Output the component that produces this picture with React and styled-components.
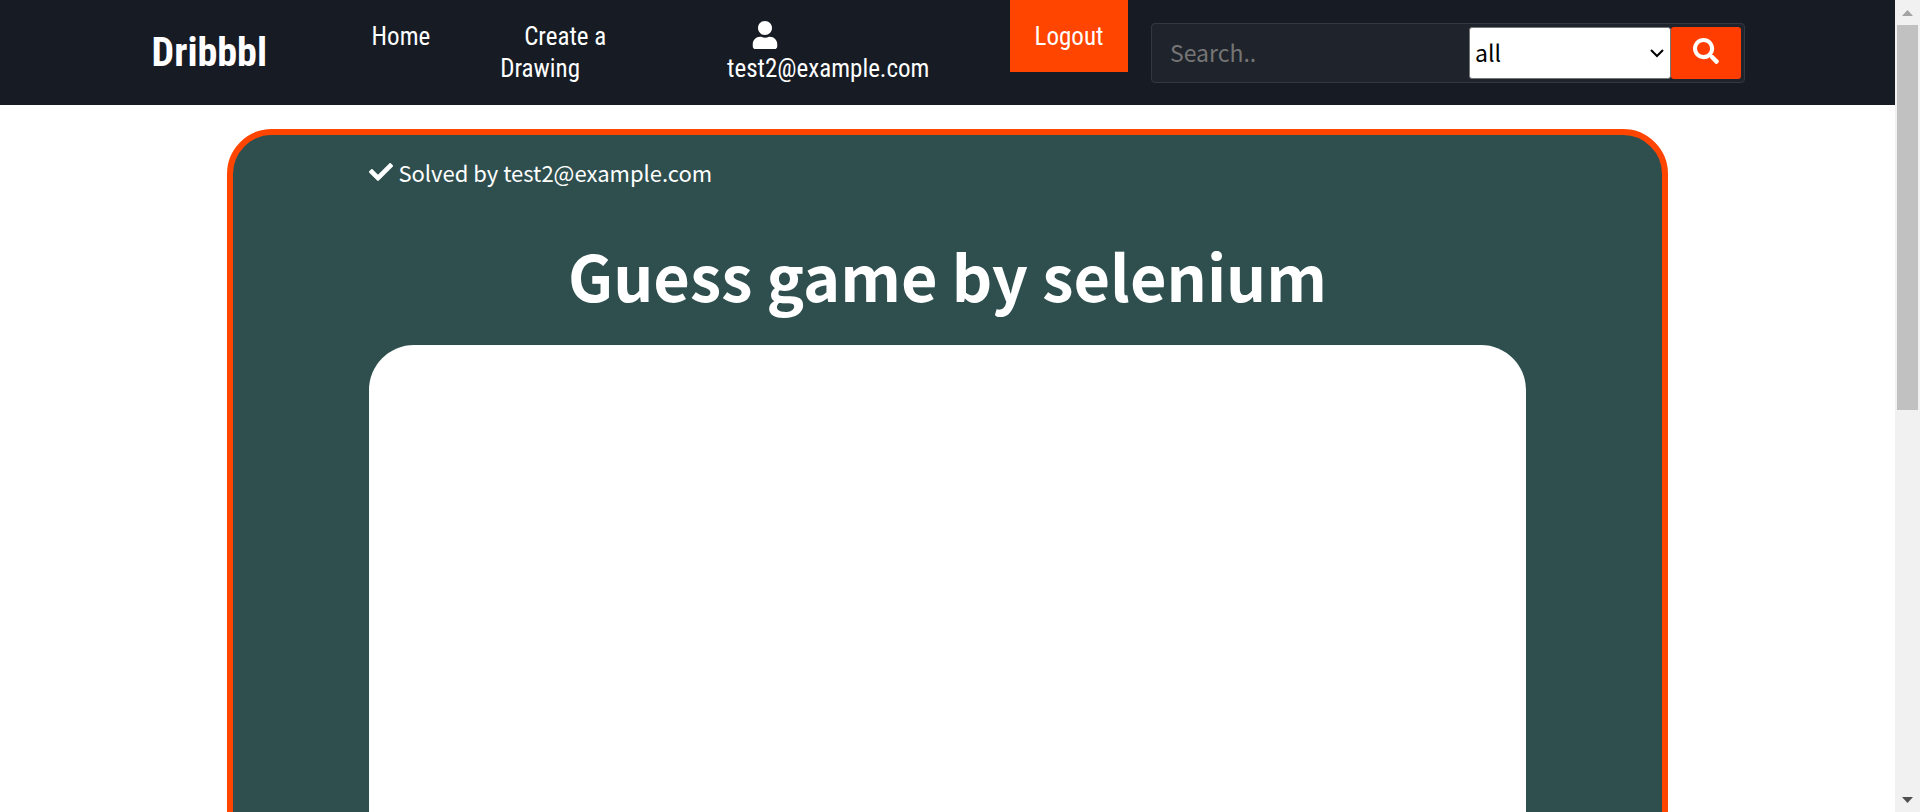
import React from "react";
import styled, { createGlobalStyle } from "styled-components";
import { FaCheck, FaSearch, FaUser } from "react-icons/fa";

const bodyFont = `"Source Sans Pro", "Noto Sans CJK SC", sans-serif`;
const navFont = `"Ubuntu Condensed", "Roboto Condensed", "Noto Sans CJK SC", sans-serif`;

const GlobalStyle = createGlobalStyle`
  *, *::before, *::after { box-sizing: border-box; }
  body { margin: 0; background: #fff; color: #fff; font-family: ${bodyFont}; }
  a { color: inherit; text-decoration: none; }
`;

const Window = styled.div`
  display: flex;
  height: 100vh;
  overflow: hidden;
`;

const Page = styled.div`
  flex: 1;
  min-width: 0;
`;

const Header = styled.header`
  display: flex;
  align-items: flex-start;
  height: 105px;
  padding: 0 150px 0 8%;
  background: #171c24;
`;

const Logo = styled.a`
  flex: 0 0 220px;
  line-height: 106px;
  font-family: ${navFont};
  font-size: 40px;
  font-weight: 700;
`;

const Nav = styled.nav`
  display: grid;
  grid-template-columns: 17% 30% 1fr auto;
  flex: 1;
  align-items: start;
  font-family: ${navFont};
  font-size: 25px;
  line-height: 32px;
`;

const NavLink = styled.a`
  max-width: ${(p) => p.$width || "none"};
  padding-top: 21px;
  text-indent: ${(p) => (p.$indent ? "24px" : "0")};

  svg { display: inline-block; vertical-align: -4px; }
`;

const Logout = styled.button`
  min-width: 118px;
  height: 72px;
  padding: 2px 0 0;
  border: 0;
  background: #ff4500;
  color: #fff;
  font: inherit;
`;

const SearchForm = styled.form`
  display: flex;
  flex: 0 0 594px;
  height: 60px;
  margin: 23px 0 0 23px;
  padding: 3px;
  border: 1px solid #33373e;
  border-radius: 4px;
  background: #1f232b;
`;

const SearchInput = styled.input`
  flex: 1;
  min-width: 0;
  padding: 0 15px 2px;
  border: 0;
  background: transparent;
  color: #fff;
  font-family: ${bodyFont};
  font-size: 23px;

  &::placeholder { color: #757575; opacity: 1; }
`;

const FilterBox = styled.div`
  position: relative;
  display: flex;
  width: 202px;
`;

const Filter = styled.select`
  appearance: none;
  width: 100%;
  padding: 0 5px 2px;
  border: 1px solid #767676;
  border-radius: 3px;
  background: #fff;
  color: #000;
  font-family: ${bodyFont};
  font-size: 23px;
`;

const Chevron = styled.svg`
  position: absolute;
  top: 22px;
  right: 7px;
  width: 14px;
  height: 9px;
  fill: none;
  stroke: #000;
  stroke-width: 2;
  pointer-events: none;
`;

const SearchButton = styled.button`
  display: flex;
  align-items: center;
  justify-content: center;
  width: 70px;
  padding: 0 0 4px;
  border: 0;
  border-radius: 3px;
  background: #ff3d00;
  color: #fff;
`;

const Game = styled.main`
  width: 76%;
  margin: 24px auto 0;
  padding: 21px 136px 60px;
  border: 6px solid #ff4500;
  border-radius: 45px;
  background: #2f4f4f;
`;

const Solved = styled.p`
  display: flex;
  align-items: center;
  gap: 5px;
  margin: 0;
  font-size: 22px;
  line-height: 32px;
`;

const Title = styled.h1`
  margin: 42px 0 25px;
  font-size: 63px;
  line-height: 90px;
  text-align: center;
`;

const Board = styled.section`
  height: 1000px;
  border-radius: 45px;
  background: #fff;
`;

const Scrollbar = styled.div`
  display: flex;
  flex-direction: column;
  align-items: center;
  width: 25px;
  background: #f1f1f1;
`;

const ScrollArrow = styled.svg`
  display: block;
  width: 11px;
  height: 6px;
  margin: 10px 0 9px;
  fill: ${(p) => p.$color};
`;

const Track = styled.div`
  flex: 1;
  width: 21px;
`;

const Thumb = styled.div`
  height: 385px;
  background: #c1c1c1;
`;

export default function App() {
  return (
    <>
      <GlobalStyle />
      <Window>
        <Page>
          <Header>
            <Logo href="#">Dribbbl</Logo>
            <Nav>
              <NavLink href="#">Home</NavLink>
              <NavLink href="#" $indent $width="120px">Create a Drawing</NavLink>
              <NavLink href="#" $indent $width="220px">
                <FaUser size={28} /> test2@example.com
              </NavLink>
              <Logout type="button">Logout</Logout>
            </Nav>
            <SearchForm>
              <SearchInput type="text" placeholder="Search.." aria-label="Search" />
              <FilterBox>
                <Filter aria-label="Filter" defaultValue="all">
                  <option>all</option>
                </Filter>
                <Chevron viewBox="0 0 14 9" aria-hidden="true">
                  <path d="M1 1 7 7 13 1" />
                </Chevron>
              </FilterBox>
              <SearchButton type="button" aria-label="Submit search">
                <FaSearch size={26} />
              </SearchButton>
            </SearchForm>
          </Header>
          <Game>
            <Solved>
              <FaCheck size={24} /> Solved by test2@example.com
            </Solved>
            <Title>Guess game by selenium</Title>
            <Board aria-label="Drawing" />
          </Game>
        </Page>
        <Scrollbar aria-hidden="true">
          <ScrollArrow viewBox="0 0 22 12" $color="#a3a3a3">
            <path d="M0 12 11 0 22 12Z" />
          </ScrollArrow>
          <Track>
            <Thumb />
          </Track>
          <ScrollArrow viewBox="0 0 22 12" $color="#505050">
            <path d="M0 0 11 12 22 0Z" />
          </ScrollArrow>
        </Scrollbar>
      </Window>
    </>
  );
}
